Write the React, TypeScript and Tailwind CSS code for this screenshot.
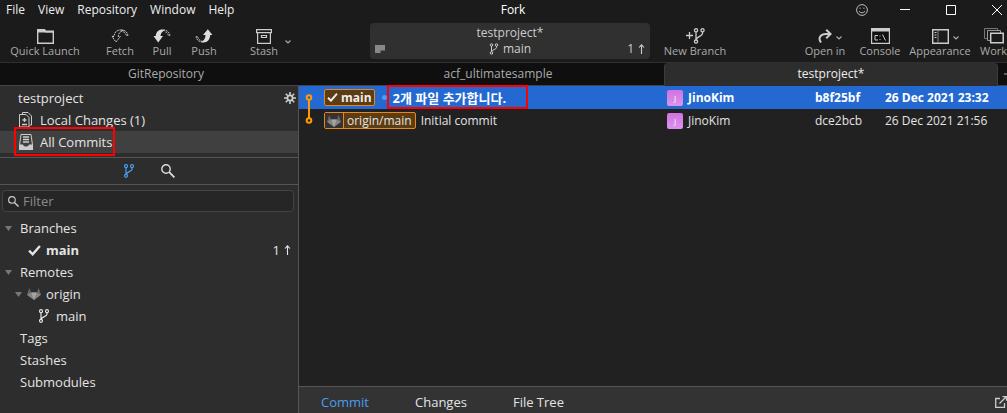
import React from 'react';

const BranchIcon: React.FC<{ className?: string }> = ({ className = '' }) => (
  <svg width="12" height="14" viewBox="0 0 12 14" fill="none" stroke="currentColor" strokeWidth="1.2" className={`shrink-0 ${className}`}>
    <circle cx="3" cy="2.2" r="1.5" />
    <circle cx="9" cy="2.2" r="1.5" />
    <circle cx="3" cy="11.8" r="1.5" />
    <path d="M3 3.7v6.6M9 3.7v1.6c0 2.2-5.6 2.4-5.8 5" />
  </svg>
);

const SearchIcon: React.FC<{ size: number }> = ({ size }) => (
  <svg width={size} height={size} viewBox="0 0 14 14" fill="none" stroke="currentColor" strokeWidth="1.4" className="shrink-0">
    <circle cx="5" cy="5" r="4.2" />
    <path d="M8.2 8.2l5.2 5.2" strokeWidth="1.8" />
  </svg>
);

const CheckIcon: React.FC<{ size?: number }> = ({ size = 13 }) => (
  <svg width={size} height={size - 2} viewBox="0 0 12 10" fill="none" stroke="currentColor" strokeWidth="2.2" className="shrink-0">
    <path d="M1 5.2l3.3 3.3L11 .8" />
  </svg>
);

const GitlabIcon = () => (
  <svg width="14" height="12" viewBox="0 0 14 12" className="shrink-0">
    <path d="M2.3 0L0 6.7 7 12z" fill="#666" />
    <path d="M11.7 0L14 6.7 7 12z" fill="#666" />
    <path d="M0 6.7L4.4 4.6h5.2L14 6.7 7 12z" fill="#858585" />
    <path d="M4.4 4.6h5.2L7 12z" fill="#a5a5a5" />
  </svg>
);

const Chevron = () => (
  <svg width="6" height="4" viewBox="0 0 6 4" fill="none" stroke="#aaa" strokeWidth="1.2" className="shrink-0">
    <path d="M.5 .5L3 3 5.5 .5" />
  </svg>
);

const Triangle = () => (
  <svg width="7" height="5" viewBox="0 0 7 5" className="shrink-0">
    <path d="M0 0h7L3.5 5z" fill="#777" />
  </svg>
);

const FolderIcon = () => (
  <svg width="17" height="15" viewBox="0 0 17 15">
    <path d="M.7 14.3V.7h6.6l1.5 2h7.5v11.6z" fill="none" stroke="#ccc" strokeWidth="1.4" />
    <path d="M0 0h7.5L9 1.5h8V3.5H0z" fill="#ccc" />
  </svg>
);

const FetchIcon = () => (
  <svg width="18" height="14" viewBox="0 0 18 14" fill="none" stroke="#ccc">
    <path d="M1 7.5h2C3.2 3.5 5.5 1 9.5 1c1 0 2 .3 3 .8C9.5 2 7.5 4 7.3 7.5h2L5 13z" strokeDasharray="2 .8" />
    <path d="M10 1c3.8-.2 6.3 2 7 5.5h-1.5C15 4.5 13.5 3 11.5 2.8" strokeDasharray="2 .8" />
  </svg>
);

const PullIcon = () => (
  <svg width="18" height="14" viewBox="0 0 18 14">
    <path d="M.5 7h2.3C3 3 5.5.5 9.5.5c1.2 0 2.2.3 3 .8C9.5 2 7.7 4 7.5 7H10l-4.8 6.5z" fill="#ddd" />
    <path d="M10 1c3.8-.2 6.3 2 7 5.5h-1.5C15 4.5 13.5 3 11.5 2.8" fill="none" stroke="#bbb" strokeDasharray="2 .8" />
  </svg>
);

const PushIcon = () => (
  <svg width="18" height="14" viewBox="0 0 18 14">
    <path d="M17.5 6h-2.3C15 10.5 12.5 13.5 8.5 13.5c-1.4 0-2.500-.4-3.300-1C8.500 12.300 10.300 10 10.500 6H8L12.800.3z" fill="#ddd" />
    <path d="M8 13C4 13 1.5 11 1 7.5h1.5C3 10 4.5 11.2 6.5 11.5" fill="none" stroke="#bbb" strokeDasharray="2 .8" />
  </svg>
);

const StashIcon = () => (
  <svg width="16" height="15" viewBox="0 0 16 15" fill="none" stroke="#ccc" strokeWidth="1.2">
    <path d="M.6 .6h14.8v3H.6zM1.6 3.6v10.8h12.8V3.6M5.5 6.5h5v2h-5z" />
  </svg>
);

const NewBranchIcon = () => (
  <svg width="19" height="16" viewBox="0 0 19 16" fill="none" stroke="#ccc" strokeWidth="1.3">
    <path d="M0 7.5h7M3.5 4v7" />
    <circle cx="10" cy="2.3" r="1.6" />
    <circle cx="16.5" cy="2.3" r="1.6" />
    <circle cx="10" cy="13.6" r="1.6" />
    <path d="M10 4v8M16.5 4v1.5c0 3-6 2.8-6.3 6.3" />
  </svg>
);

const OpenIcon = () => (
  <svg width="14" height="14" viewBox="0 0 14 14" fill="none" stroke="#ccc" strokeWidth="2">
    <path d="M3 13.5C-.3 9 2.5 5 8 5h4.5" />
    <path d="M8.2 .8L12.6 5 8.2 9.3" />
  </svg>
);

const ConsoleIcon = () => (
  <svg width="19" height="16" viewBox="0 0 19 16">
    <path d="M.6 .6h17.8v14.8H.6z" fill="#111" stroke="#ccc" strokeWidth="1.2" />
    <path d="M0 0h19v3.5H0z" fill="#ccc" />
    <path d="M7 7.5H4v4.5h3M9 7.5v1M9 11v1M11.5 6.5l3 6" fill="none" stroke="#ccc" />
  </svg>
);

const AppearanceIcon = () => (
  <svg width="17" height="15" viewBox="0 0 17 15" fill="none" stroke="#ccc" strokeWidth="1.4">
    <path d="M.7 .7h15.6v13.6H.7z" />
    <path d="M6 1v13" strokeWidth="1" stroke="#888" />
    <path d="M2.5 3.5h2M2.5 6h2M2.5 8.5h2" strokeWidth="1" />
  </svg>
);

const WorkspacesIcon = () => (
  <svg width="20" height="16" viewBox="0 0 20 16" fill="#1b1b1b" stroke="#ccc">
    <path d="M.5 .5h13v10H.5z" stroke="#777" />
    <path d="M3.5 2.5h13v10h-13z" stroke="#999" />
    <path d="M6.7 5.2h12.500v9.600H6.700z" strokeWidth="1.5" />
  </svg>
);

const GearIcon = () => (
  <svg width="12" height="12" viewBox="0 0 12 12" fill="none" stroke="#ccc">
    <circle cx="6" cy="6" r="2.6" strokeWidth="1.8" />
    <path d="M6 0v3M6 9v3M0 6h3M9 6h3M1.8 1.8l2 2M8.2 8.2l2 2M10.2 1.8l-2 2M3.8 8.2l-2 2" strokeWidth="1.6" />
  </svg>
);

const ChangesIcon = () => (
  <svg width="13" height="16" viewBox="0 0 13 16" fill="none" stroke="#ccc" className="shrink-0">
    <path d="M3.5 2V.5h5.500l3.500 3.500v9h-2" />
    <path d="M.5 2.500h6.500l3 3v9.500H.5z" />
    <path d="M3.500 8h4M5.500 6v4M3 12.500h5" strokeWidth="1.3" />
  </svg>
);

const InboxIcon = () => (
  <svg width="14" height="16" viewBox="0 0 14 16" fill="none" stroke="#ccc" className="shrink-0">
    <path d="M.5 11L2 .5h10L13.5 11" />
    <path d="M4 3h6M4 5.5h6M4 8h6" strokeWidth="1.3" />
    <path d="M0 10.5h4c.3 1.600 1.500 2 3 2s2.700-.4 3-2h4V16H0z" fill="#ccc" stroke="none" />
  </svg>
);

const Ahead: React.FC<{ count: number }> = ({ count }) => (
  <span className="flex items-center justify-end gap-1">
    {count}
    <svg width="7" height="10" viewBox="0 0 7 10" fill="none" stroke="currentColor" strokeWidth="1.1">
      <path d="M3.5 10V1M1 3.5L3.5 .8 6 3.5" />
    </svg>
  </span>
);

type ToolButtonProps = {
  label: string;
  icon: React.ReactNode;
  className: string;
  menu?: boolean;
};

const ToolButton: React.FC<ToolButtonProps> = ({ label, icon, className, menu }) => (
  <button className={`flex flex-col items-center shrink-0 whitespace-nowrap text-[#aaa] ${className}`}>
    <span className="relative flex h-4 items-center">
      {icon}
      {menu && (
        <span className="absolute left-full top-2 ml-1">
          <Chevron />
        </span>
      )}
    </span>
    <span className="leading-[14px]">{label}</span>
  </button>
);

const menus = ['File', 'View', 'Repository', 'Window', 'Help'];
const tabs = ['GitRepository', 'acf_ultimatesample', 'testproject*'];

const commits = [
  { sha: 'b8f25bf', author: 'JinoKim', date: '26 Dec 2021 23:32', message: '2개 파일 추가합니다.', selected: true },
  { sha: 'dce2bcb', author: 'JinoKim', date: '26 Dec 2021 21:56', message: 'Initial commit', selected: false },
];

const TitleBar = () => (
  <div className="flex h-5 items-center text-[12px] leading-5 text-[#eee]">
    <nav className="flex flex-1 gap-[13px] pl-[6px]">
      {menus.map((m) => (
        <button key={m}>{m}</button>
      ))}
    </nav>
    <h1 className="w-[280px] text-center text-white">Fork</h1>
    <div className="flex flex-1 justify-end">
      <button aria-label="Feedback" className="flex w-10 items-center justify-center">
        <svg width="12" height="12" viewBox="0 0 12 12" fill="none" stroke="#bbb">
          <circle cx="6" cy="6" r="5.4" />
          <path d="M3 7c1 2.3 5 2.3 6 0M3.5 4.2h1.2M7.3 4.2h1.2" />
        </svg>
      </button>
      <button aria-label="Minimize" className="flex w-[46px] items-center justify-center">
        <svg width="10" height="10" viewBox="0 0 10 10" stroke="#fff"><path d="M0 4.5h10" /></svg>
      </button>
      <button aria-label="Maximize" className="flex w-[46px] items-center justify-center">
        <svg width="10" height="10" viewBox="0 0 10 10" fill="none" stroke="#fff"><path d="M.5 .5h9v9h-9z" /></svg>
      </button>
      <button aria-label="Close" className="flex w-[46px] items-center justify-center">
        <svg width="10" height="10" viewBox="0 0 10 10" stroke="#fff"><path d="M0 0l10 10M10 0L0 10" /></svg>
      </button>
    </div>
  </div>
);

const Toolbar = () => (
  <div className="flex h-[42px] pt-[3px] text-[11px]">
    <div className="flex flex-1 pt-[5px]">
      <ToolButton label="Quick Launch" icon={<FolderIcon />} className="w-[90px]" />
      <ToolButton label="Fetch" icon={<FetchIcon />} className="w-[42px] ml-[9px]" />
      <ToolButton label="Pull" icon={<PullIcon />} className="w-[42px]" />
      <ToolButton label="Push" icon={<PushIcon />} className="w-[42px]" />
      <ToolButton label="Stash" icon={<StashIcon />} className="w-[42px] ml-[18px]" />
      <button aria-label="Stash options" className="flex h-7 items-center">
        <Chevron />
      </button>
    </div>

    <button className="flex h-9 w-[280px] flex-col justify-center rounded-sm bg-[#303030] text-[12px] leading-4 text-[#ccc]">
      <span className="w-full text-center">testproject*</span>
      <span className="grid h-4 w-full grid-cols-3 items-center px-[5px]">
        <svg width="10" height="8" viewBox="0 0 10 8"><path d="M0 0h10v5.5H5.5V8H0z" fill="#888" /></svg>
        <span className="flex items-center justify-center gap-1">
          <BranchIcon className="h-3 w-[10px]" />
          main
        </span>
        <Ahead count={1} />
      </span>
    </button>

    <div className="flex flex-1 pt-[5px]">
      <ToolButton label="New Branch" icon={<NewBranchIcon />} className="w-[90px]" />
      <ToolButton label="Open in" icon={<OpenIcon />} className="w-[60px] ml-auto" menu />
      <ToolButton label="Console" icon={<ConsoleIcon />} className="w-[50px]" />
      <ToolButton label="Appearance" icon={<AppearanceIcon />} className="w-[70px]" menu />
      <ToolButton label="Work" icon={<WorkspacesIcon />} className="w-[45px] pr-2" />
    </div>
  </div>
);

const TabBar = () => (
  <div className="flex h-6 border-t border-[#303030] bg-[#0f0f0f] text-[12px] leading-[22px]">
    {tabs.map((tab, i) => (
      <button
        key={tab}
        className={
          i === 2
            ? 'flex-1 rounded-t border-x border-b border-x-[#3c3c3c] border-b-[#2d2d2d] bg-[#2d2d2d] text-[#eee]'
            : 'flex-1 border-b border-[#444] text-[#aaa]'
        }
      >
        {tab}
      </button>
    ))}
    <button aria-label="New tab" className="flex w-[22px] items-center justify-center border-b border-[#444]">
      <svg width="10" height="10" viewBox="0 0 10 10" stroke="#aaa"><path d="M0 5h10M5 0v10" /></svg>
    </button>
  </div>
);

const Sidebar = () => (
  <aside className="w-[299px] shrink-0 border-r border-[#555] bg-[#2d2d2d] text-[13px] leading-[22px] text-[#e4e4e4]">
    <div className="flex h-[23px] items-center justify-between pl-[18px] pr-[2px]">
      <h2>testproject</h2>
      <button aria-label="Repository settings"><GearIcon /></button>
    </div>
    <button className="flex h-[22px] w-full items-center gap-2 pl-[19px]">
      <ChangesIcon />
      Local Changes (1)
    </button>
    <button className="relative flex h-[22px] w-full items-center gap-[7px] bg-[#404040] pl-[19px]">
      <InboxIcon />
      All Commits
      <span className="absolute -top-[4px] left-[14px] h-[29px] w-[101px] border-2 border-[#f00]" />
    </button>

    <div className="mt-1 flex h-7 items-center justify-center gap-[26px] border-y border-[#555]">
      <button aria-label="Branches" className="text-[#4a9df0]"><BranchIcon /></button>
      <button aria-label="Search" className="text-[#ddd]"><SearchIcon size={14} /></button>
    </div>

    <label className="mt-[5px] mr-1 ml-[2px] flex h-[22px] items-center gap-1 rounded-sm border border-[#444] bg-[#262626] px-[5px] text-[#ccc]">
      <SearchIcon size={11} />
      <input
        type="text"
        placeholder="Filter"
        aria-label="Filter"
        className="min-w-0 flex-1 bg-transparent outline-none placeholder:text-[#8a8a8a]"
      />
    </label>

    <ul className="mt-[5px]">
      <li className="flex items-center gap-2 pl-[5px]"><Triangle />Branches</li>
      <li className="flex items-center gap-[5px] pl-[28px] pr-[7px]">
        <CheckIcon />
        <span className="mr-auto font-bold">main</span>
        <Ahead count={1} />
      </li>
      <li className="flex items-center gap-2 pl-[5px]"><Triangle />Remotes</li>
      <li className="flex items-center gap-[5px] pl-[15px]"><Triangle /><GitlabIcon />origin</li>
      <li className="flex items-center gap-[6px] pl-[38px]"><BranchIcon />main</li>
      <li className="pl-5">Tags</li>
      <li className="pl-5">Stashes</li>
      <li className="pl-5">Submodules</li>
    </ul>
  </aside>
);

const Graph: React.FC<{ first: boolean }> = ({ first }) => (
  <svg width="20" height="23" viewBox="0 0 20 23" fill="none" stroke="#f90" strokeWidth="2" className="shrink-0">
    <path d={first ? 'M10 14v9' : 'M10 0v9'} />
    <circle cx="10" cy="11.5" r="2.3" />
  </svg>
);

const CommitTable = () => (
  <table className="w-full table-fixed text-left text-[12px] leading-[18px]">
    <colgroup>
      <col />
      <col className="w-[148px]" />
      <col className="w-[70px]" />
      <col className="w-[122px]" />
    </colgroup>
    <tbody>
      {commits.map((c) => (
        <tr
          key={c.sha}
          className={c.selected ? 'h-[23px] bg-[#2369d1] font-bold text-white' : 'h-[23px] text-[#e4e4e4]'}
        >
          <td className="p-0">
            <div className="flex items-center whitespace-nowrap">
              <Graph first={c.selected} />
              {c.selected ? (
                <>
                  <span className="ml-[5px] flex h-[17px] items-center gap-[3px] rounded-xs border border-[#e8871e] bg-[#5c3c12] px-[2px] text-[#eee]">
                    <CheckIcon size={11} />
                    main
                  </span>
                  <span className="ml-[7px] size-[5px] rounded-full bg-[#4a9df0]" />
                  <span className="relative ml-[6px] text-[13px]">
                    {c.message}
                    <span className="absolute -left-[6px] -top-[4px] h-6 w-[141px] border-2 border-[#f00]" />
                  </span>
                </>
              ) : (
                <>
                  <span className="ml-[5px] flex h-[17px] items-center rounded-xs border border-[#e8871e] bg-[#5c3c12]">
                    <span className="flex h-full items-center border-r border-[#e8871e] bg-[#333] px-[2px]"><GitlabIcon /></span>
                    <span className="px-[3px]">origin/main</span>
                  </span>
                  <span className="ml-[5px]">{c.message}</span>
                </>
              )}
            </div>
          </td>
          <td className="p-0">
            <div className="flex items-center gap-[5px]">
              <span className="flex size-4 items-center justify-center rounded-xs bg-linear-to-b from-[#cf72e2] to-[#dc93ec] text-[8px] font-normal text-white">J</span>
              {c.author}
            </div>
          </td>
          <td className="p-0">{c.sha}</td>
          <td className="whitespace-nowrap p-0">{c.date}</td>
        </tr>
      ))}
    </tbody>
  </table>
);

const App: React.FC = () => {
  return (
    <div className="flex h-screen flex-col overflow-hidden bg-[#212121] font-['Open_Sans','Noto_Sans_CJK_KR',sans-serif]">
      {/* The window is a little wider than the viewport */}
      <header className="w-[calc(100%+13px)] shrink-0 bg-[#1b1b1b]">
        <TitleBar />
        <Toolbar />
        <TabBar />
      </header>

      <div className="flex min-h-0 flex-1">
        <Sidebar />
        <main className="flex min-w-0 flex-1 flex-col">
          <div className="flex-1">
            <CommitTable />
          </div>
          <div className="flex h-[27px] items-center gap-[46px] border-t border-[#555] bg-[#333] pl-[22px] pt-1 text-[13px] leading-[22px] text-[#e4e4e4]">
            <button className="text-[#4a9df0]">Commit</button>
            <button>Changes</button>
            <button>File Tree</button>
            <button aria-label="Open in new window" className="ml-auto">
              <svg width="12" height="12" viewBox="0 0 12 12" fill="none" stroke="#ccc" strokeWidth="1.3">
                <path d="M5 2.5H.7v8.8h8.8V7M4.5 7.5L11 1M7.5 .7h4v4" />
              </svg>
            </button>
          </div>
        </main>
      </div>
    </div>
  );
};

export default App;
